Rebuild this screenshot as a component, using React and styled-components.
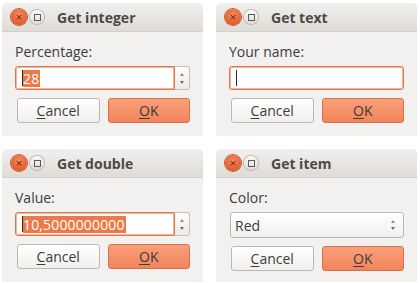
import React from "react";
import styled, { createGlobalStyle } from "styled-components";

const Global = createGlobalStyle`
  html, body {
    margin: 0;
    background: #ffffff;
  }
  body {
    font-family: "Open Sans", "DejaVu Sans", sans-serif;
  }
`;

const Desk = styled.div`
  display: grid;
  grid-template-columns: 201px 201px;
  grid-auto-rows: 133px;
  column-gap: 13px;
  row-gap: 13px;
  padding: 3px 0 0 2px;
`;

const Window = styled.div`
  display: flex;
  flex-direction: column;
  background: #f2f1f0;
  border-radius: 5px 5px 0 0;
  overflow: hidden;
`;

const TitleBar = styled.div`
  height: 28px;
  flex: none;
  display: flex;
  align-items: center;
  padding-left: 9px;
  background: linear-gradient(#f1f0ee, #dfdbd6);
  border-bottom: 1px solid #d3cfca;
`;

const CloseButton = styled.div`
  width: 16px;
  height: 16px;
  border-radius: 50%;
  background: radial-gradient(circle at 50% 35%, #f68a5d, #e05a2b 75%);
  box-shadow: 0 0 0 1px #c9542a;
  display: flex;
  align-items: center;
  justify-content: center;
  color: #5b2210;
  font-family: "DejaVu Sans", sans-serif;
  font-size: 9px;
  line-height: 1;
`;

const MaxButton = styled.div`
  width: 14px;
  height: 14px;
  margin-left: 3px;
  border-radius: 50%;
  background: linear-gradient(#fbfaf9, #dedad5);
  box-shadow: 0 0 0 1px #bdb8b1;
  display: flex;
  align-items: center;
  justify-content: center;

  &::after {
    content: "";
    width: 5px;
    height: 5px;
    border: 1px solid #5e5c58;
  }
`;

const Title = styled.div`
  margin-left: 13px;
  font-weight: 700;
  font-size: 14px;
  color: #4b4a47;
`;

const Body = styled.div`
  flex: 1;
  display: flex;
  flex-direction: column;
  padding: 11px 13px 0 13px;
`;

const Label = styled.div`
  font-size: 14px;
  line-height: 18px;
  color: #3c3c3c;
  margin-bottom: 5px;
`;

const FieldRow = styled.div`
  display: flex;
  height: 24px;
`;

const Field = styled.div`
  flex: 1;
  display: flex;
  align-items: center;
  background: #ffffff;
  border: 1px solid #e2764c;
  border-radius: ${p => (p.spin ? "3px 0 0 3px" : "3px")};
  box-shadow: inset 0 0 0 1px #f2b59c;
  padding-left: 6px;
  font-size: 14px;
  color: #3c3c3c;
`;

const Caret = styled.span`
  width: 1px;
  height: 16px;
  background: #2a2a2a;
`;

const Selected = styled.span`
  background: #ea7a47;
  color: #ffffff;
  line-height: 17px;
  padding-right: 1px;
  letter-spacing: 0.15px;
`;

const Spinner = styled.div`
  width: 14px;
  display: flex;
  flex-direction: column;
  align-items: center;
  justify-content: center;
  gap: 5px;
  background: linear-gradient(#fdfdfc, #ecebe9);
  border: 1px solid #c3bfb9;
  border-left: none;
  border-radius: 0 3px 3px 0;
`;

const Arrow = styled.div`
  width: 0;
  height: 0;
  border-left: 2.5px solid transparent;
  border-right: 2.5px solid transparent;
  ${p =>
    p.down
      ? "border-top: 3px solid #6f6d69;"
      : "border-bottom: 3px solid #8f8c88;"}
`;

const Combo = styled.div`
  height: 24px;
  display: flex;
  align-items: center;
  justify-content: space-between;
  padding: 0 8px 0 4px;
  margin-left: 1px;
  background: linear-gradient(#ffffff, #f1f0ee);
  border: 1px solid #bcb8b2;
  border-radius: 3px;
  font-size: 14px;
  color: #3c3c3c;
`;

const ComboArrows = styled.div`
  display: flex;
  flex-direction: column;
  gap: 4px;
`;

const ButtonRow = styled.div`
  display: flex;
  gap: 8px;
  margin-top: 8px;
  padding-left: 2px;
`;

const Button = styled.div`
  width: 81px;
  height: 23px;
  display: flex;
  align-items: center;
  justify-content: center;
  border-radius: 3px;
  font-size: 14px;
  color: #3c3c3c;
  border: 1px solid ${p => (p.primary ? "#d8714b" : "#bcb8b2")};
  background: ${p =>
    p.primary
      ? "linear-gradient(#f9a07b, #f2845a)"
      : "linear-gradient(#ffffff, #f0efed)"};
`;

const Key = styled.span`
  text-decoration: underline;
  text-underline-offset: 2px;
`;

function Dialog({ title, label, children }) {
  return (
    <Window>
      <TitleBar>
        <CloseButton>×</CloseButton>
        <MaxButton />
        <Title>{title}</Title>
      </TitleBar>
      <Body>
        <Label>{label}</Label>
        {children}
        <ButtonRow>
          <Button>
            <Key>C</Key>ancel
          </Button>
          <Button primary>
            <Key>O</Key>K
          </Button>
        </ButtonRow>
      </Body>
    </Window>
  );
}

function SpinField({ value }) {
  return (
    <FieldRow>
      <Field spin>
        <Caret />
        <Selected>{value}</Selected>
      </Field>
      <Spinner>
        <Arrow />
        <Arrow down />
      </Spinner>
    </FieldRow>
  );
}

export default function App() {
  return (
    <>
      <Global />
      <Desk>
        <Dialog title="Get integer" label="Percentage:">
          <SpinField value="28" />
        </Dialog>
        <Dialog title="Get text" label="Your name:">
          <FieldRow>
            <Field>
              <Caret />
            </Field>
          </FieldRow>
        </Dialog>
        <Dialog title="Get double" label="Value:">
          <SpinField value="10,5000000000" />
        </Dialog>
        <Dialog title="Get item" label="Color:">
          <Combo>
            Red
            <ComboArrows>
              <Arrow />
              <Arrow down />
            </ComboArrows>
          </Combo>
        </Dialog>
      </Desk>
    </>
  );
}
